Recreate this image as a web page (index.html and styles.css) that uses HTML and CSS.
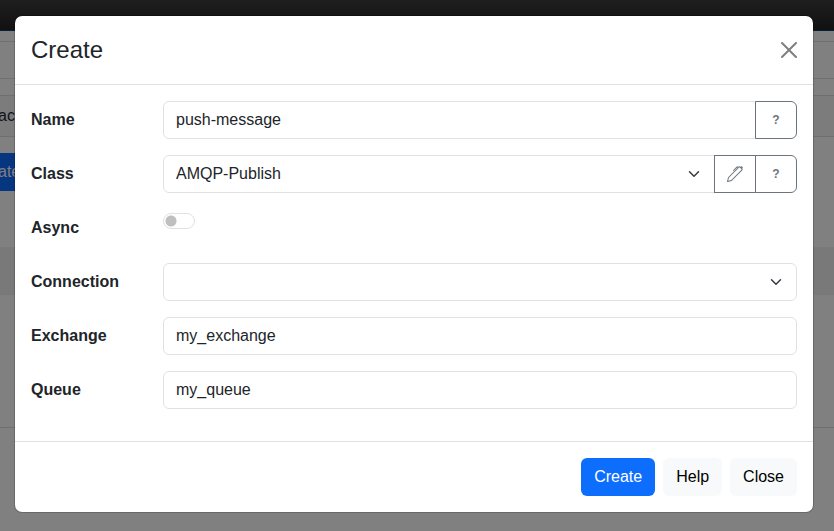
FILE: index.html
```html
<!DOCTYPE html>
<html lang="en">
<head>
<meta charset="utf-8">
<title>Create</title>
<link rel="stylesheet" href="styles.css">
</head>
<body>
<div class="page" aria-hidden="true">
  <div class="topbar"></div>
  <div class="crumbs"></div>
  <div class="toolbar"></div>
  <div class="gap"></div>
  <div class="tabs"><span class="clip">ac</span></div>
  <div class="actions"><span class="clip">ate</span></div>
  <div class="space"></div>
  <div class="stripe"></div>
  <div class="content"></div>
</div>
<div class="overlay">
  <form class="modal" role="dialog" aria-labelledby="title">
    <header class="modal-header">
      <h1 id="title">Create</h1>
      <button type="button" class="btn-close" aria-label="Close">
        <svg viewBox="0 0 16 16" width="16" height="16" fill="currentColor"><path d="M.293.293a1 1 0 0 1 1.414 0L8 6.586 14.293.293a1 1 0 1 1 1.414 1.414L9.414 8l6.293 6.293a1 1 0 0 1-1.414 1.414L8 9.414l-6.293 6.293a1 1 0 0 1-1.414-1.414L6.586 8 .293 1.707a1 1 0 0 1 0-1.414z"/></svg>
      </button>
    </header>
    <div class="modal-body">
      <div class="row">
        <label for="name">Name</label>
        <div class="group">
          <input class="control" id="name" type="text" value="push-message">
          <button type="button" class="addon">?</button>
        </div>
      </div>
      <div class="row">
        <label for="class">Class</label>
        <div class="group">
          <div class="select-wrap">
            <select class="control" id="class"><option>AMQP-Publish</option></select>
            <svg class="chevron" viewBox="0 0 16 16" width="16" height="12"><path d="m2 5 6 6 6-6"/></svg>
          </div>
          <button type="button" class="addon" aria-label="Edit">
            <svg viewBox="0 0 16 16" width="16" height="16" fill="currentColor"><path d="m13.498.795.149-.149a1.207 1.207 0 1 1 1.707 1.708l-.149.148a1.5 1.5 0 0 1-.059 2.059L4.854 14.854a.5.5 0 0 1-.233.131l-4 1a.5.5 0 0 1-.606-.606l1-4a.5.5 0 0 1 .131-.232l9.642-9.642a.5.5 0 0 0-.642.056L6.854 4.854a.5.5 0 1 1-.708-.708L9.44.854A1.5 1.5 0 0 1 11.5.796a1.5 1.5 0 0 1 1.998-.001m-.644.766a.5.5 0 0 0-.707 0L1.95 11.756l-.764 3.057 3.057-.764L14.44 3.854a.5.5 0 0 0 0-.708z"/></svg>
          </button>
          <button type="button" class="addon">?</button>
        </div>
      </div>
      <div class="row">
        <label for="async">Async</label>
        <div class="group"><input class="switch" id="async" type="checkbox" role="switch"></div>
      </div>
      <div class="row">
        <label for="connection">Connection</label>
        <div class="group">
          <div class="select-wrap">
            <select class="control" id="connection"><option></option></select>
            <svg class="chevron" viewBox="0 0 16 16" width="16" height="12"><path d="m2 5 6 6 6-6"/></svg>
          </div>
        </div>
      </div>
      <div class="row">
        <label for="exchange">Exchange</label>
        <div class="group"><input class="control" id="exchange" type="text" value="my_exchange"></div>
      </div>
      <div class="row">
        <label for="queue">Queue</label>
        <div class="group"><input class="control" id="queue" type="text" value="my_queue"></div>
      </div>
    </div>
    <footer class="modal-footer">
      <button type="button" class="btn primary">Create</button>
      <button type="button" class="btn">Help</button>
      <button type="button" class="btn">Close</button>
    </footer>
  </form>
</div>
</body>
</html>
```
FILE: styles.css
```css
* { box-sizing: border-box; }
html, body { height: 100%; }
body {
  margin: 0;
  overflow: hidden;
  background: #808080;
  color: #212529;
  font: 16px/24px "Liberation Sans", Arial, sans-serif;
}
button, input, select { font: inherit; color: inherit; margin: 0; }

/* Dimmed page behind the dialog */
.page { display: flex; flex-direction: column; height: 100vh; }
.page > div { flex: none; border-bottom: 1px solid #6f6f6f; }
.page .topbar { height: 31px; background: linear-gradient(#1e1e1e, #111); border-bottom-color: #06203c; }
.page .crumbs { height: 11px; }
.page .toolbar { height: 37px; }
.page .gap { height: 17px; }
.page .tabs { height: 41px; padding-top: 8px; background: #7c7c7c; color: #10131a; }
.page .clip { text-indent: -2px; display: block; }
.page .actions { height: 54px; padding-top: 16px; border: 0; color: #808080; }
.page .actions .clip { width: 48px; height: 38px; padding-top: 7px; background: #073680; }
.page .space { height: 56px; border: 0; }
.page .stripe { height: 48px; background: #797979; border: 0; }
.page .content { height: 133px; }

.overlay { position: absolute; inset: 0; padding: 15px 20px 15px 14px; }
.modal {
  max-width: 800px;
  background: #fff;
  background-clip: padding-box;
  border: 1px solid rgba(0, 0, 0, .175);
  border-radius: 8px;
}
.modal-header {
  display: flex;
  align-items: center;
  justify-content: space-between;
  padding: 16px;
  border-bottom: 1px solid #dee2e6;
}
h1 { margin: 0; font-size: 24px; line-height: 36px; font-weight: 400; }
.btn-close { display: flex; padding: 0; border: 0; background: none; color: #7f7f7f; }

.modal-body { display: grid; gap: 16px; padding: 16px 16px 32px; }
.row { display: grid; grid-template-columns: 132px 1fr; min-height: 38px; }
label { padding-top: 7px; font-weight: 700; }
.group { display: flex; min-width: 0; }
.control {
  flex: 1;
  display: block;
  width: 100%;
  min-width: 0;
  height: 38px;
  padding: 0 12px;
  border: 1px solid #dee2e6;
  border-radius: 6px;
  background: #fff;
  appearance: none;
}
.select-wrap { position: relative; flex: 1; }
.chevron {
  position: absolute;
  right: 13px;
  top: 13px;
  fill: none;
  stroke: #343a40;
  stroke-width: 2;
  stroke-linecap: round;
  stroke-linejoin: round;
  pointer-events: none;
}
.group:has(.addon) .control { border-top-right-radius: 0; border-bottom-right-radius: 0; }
.addon {
  display: flex;
  align-items: center;
  justify-content: center;
  width: 42px;
  height: 38px;
  margin-left: -1px;
  padding: 0;
  position: relative;
  border: 1px solid #6c757d;
  background: #fff;
  color: #6c757d;
  font-size: 12px;
  font-weight: 700;
}
.addon:last-child { border-radius: 0 6px 6px 0; }
.switch {
  appearance: none;
  width: 32px;
  height: 16px;
  margin-top: 4px;
  border: 1px solid #dee2e6;
  border-radius: 8px;
  background: radial-gradient(circle at 7px 7px, #bfbfbf 5px, #fff 6px);
}

.modal-footer {
  display: flex;
  justify-content: flex-end;
  gap: 8px;
  padding: 16px;
  border-top: 1px solid #dee2e6;
}
.btn { height: 38px; padding: 0 13px; border: 0; border-radius: 6px; background: #f8f9fa; color: #000; }
.btn.primary { background: #0d6efd; color: #fff; }
```
